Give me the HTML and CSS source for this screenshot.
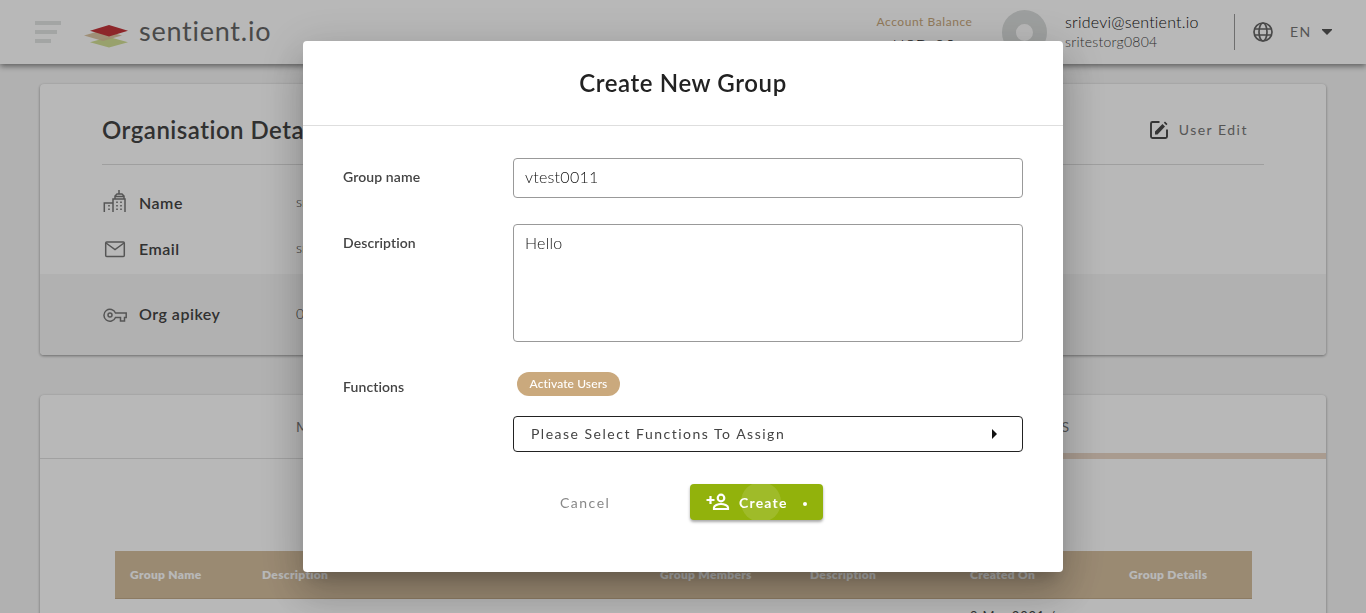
FILE: index.html
```
<!DOCTYPE html>
<html lang="en">
<head>
<meta charset="utf-8">
<title>sentient.io</title>
<link rel="stylesheet" href="styles.css">
</head>
<body>
<header class="topbar">
  <div class="burger"><i></i><i></i><i></i></div>
  <div class="brand">
    <svg width="46" height="24" viewBox="0 0 46 24">
      <path d="M6 17.200 25 12l19 5.200L25 22.500z" fill="#d3e096"/>
      <path d="M0 10.500 19 5l19 5.500L19 16z" fill="#d9c19b" fill-opacity=".9"/>
      <path d="M6 5.700 25 0l19 5.700L25 11.500z" fill="#c4353b"/>
    </svg>
    <span class="brand-name">sentient.io</span>
  </div>
  <div class="balance"><span class="balance-label">Account Balance</span><span class="balance-value">USD 20</span></div>
  <div class="avatar"></div>
  <div class="account"><span class="account-mail">sridevi@sentient.io</span><span class="account-org">sritestorg0804</span></div>
  <div class="lang">
    <svg width="20" height="20" viewBox="0 0 20 20" fill="none" stroke="#666" stroke-width="1.700"><circle cx="10" cy="10" r="9"/><ellipse cx="10" cy="10" rx="4" ry="9"/><path d="M1.500 7h17M1.500 13h17"/></svg>
    <span class="lang-code">EN</span>
    <svg width="10" height="6" viewBox="0 0 10 6"><path d="M0 0h10v1L5 6 0 1z" fill="#555"/></svg>
  </div>
</header>
<main class="page">
  <section class="card details">
    <div class="details-head">
      <h2 class="details-title">Organisation Details</h2>
      <div class="edit">
        <svg width="20" height="20" viewBox="0 0 20 20" fill="none" stroke="#484848" stroke-width="1.900"><path d="M10.500 2H3.500Q2 2 2 3.500v13Q2 18 3.500 18h13q1.500 0 1.500-1.500V9.500"/><path d="M6 14.500v-3L13.500 4l2.500 2.500-7.500 8zM14.800 2.700l1.200-1.200 2.500 2.500-1.200 1.200z" fill="#484848" stroke="none"/></svg>
        <span class="edit-label">User Edit</span>
      </div>
    </div>
    <div class="detail name">
      <svg width="24" height="24" viewBox="0 0 24 24" fill="none" stroke="#777" stroke-width="1.500"><path d="M1.300 23V14h8M10 23V10h12v13M12 10V7l2-2h5l2 2v3M12 7.500h9M16 1v4"/><path d="M6 16v1.600M6 19.500v1.600M14 12.500v1.600M18 12.500v1.600M14 16v1.600M18 16v1.600M14 19.500v1.600M18 19.500v1.600" stroke-width="1.600"/></svg>
      <span class="detail-label">Name</span><span class="detail-value">sritestorg</span>
    </div>
    <div class="detail email">
      <svg width="24" height="24" viewBox="0 0 24 24" fill="none" stroke="#777" stroke-width="1.500"><rect x="2.700" y="5" width="18.600" height="14.500" rx="1"/><path d="m3 6 9 6.500L21 6"/></svg>
      <span class="detail-label">Email</span><span class="detail-value">sridevi</span>
    </div>
    <div class="detail apikey">
      <svg width="24" height="24" viewBox="0 0 24 24" fill="none" stroke="#777" stroke-width="1.500"><path d="M12.500 10h10.700v4.500h-1.700V18h-4v-3.500h-5A6 6 0 1 1 12.500 10z"/><circle cx="7" cy="12" r="2"/></svg>
      <span class="detail-label">Org apikey</span><span class="detail-value">0A4C92E1</span>
    </div>
  </section>
  <section class="card groups">
    <div class="tabs"><span class="tab">MEMBERS</span><span class="tab active">GROUPS</span></div>
    <div class="grid thead"><span>Group Name</span><span>Description</span><span>Group Members</span><span>Description</span><span>Created On</span><span>Group Details</span></div>
    <div class="grid row"><span></span><span></span><span></span><span></span><span>9 Mar 2021 /</span><span></span></div>
  </section>
</main>
<div class="overlay">
  <div class="modal">
    <h1 class="modal-title"><span>Create New Group</span></h1>
    <div class="form">
      <label class="f-label f-group">Group name</label><div class="input">vtest0011</div>
      <label class="f-label f-desc">Description</label><div class="input area">Hello</div>
      <label class="f-label f-func">Functions</label>
      <div class="functions">
        <span class="chip">Activate Users</span>
        <div class="select"><span>Please Select Functions To Assign</span><svg width="5" height="10" viewBox="0 0 5 10"><path d="M0 0l5 5-5 5z" fill="#111"/></svg></div>
      </div>
    </div>
    <div class="actions">
      <span class="cancel">Cancel</span>
      <div class="create">
        <i class="ripple"></i>
        <svg width="24" height="18" viewBox="0 0 24 18" fill="none" stroke="#fff" stroke-width="2.200"><circle cx="15" cy="5" r="3.300"/><path d="M8 16v-1.500c0-2.200 4-3.500 7-3.500s7 1.300 7 3.500V16zM4.500 3v8M.5 7h8"/></svg>
        <span class="create-label">Create</span><i class="dot"></i>
      </div>
    </div>
  </div>
</div>
</body>
</html>
```
FILE: styles.css
```
* { box-sizing: border-box; }
body { margin: 0; height: 613px; overflow: hidden; background: #f6f6f6; font-family: Lato, "Noto Sans", sans-serif; font-variant-ligatures: none; color: #444; }
svg { flex: none; display: block; }
h1, h2 { margin: 0; }
span { white-space: nowrap; }

.topbar { position: relative; height: 64px; display: flex; background: #fff; box-shadow: 0 2px 6px rgba(0,0,0,.5); }
.burger { width: 26px; margin: 21px 0 0 35px; display: flex; flex-direction: column; gap: 5px; }
.burger i { height: 4px; background: #e2e5e4; }
.burger i:nth-child(2) { width: 22px; }
.burger i:nth-child(3) { width: 16px; }
.brand { width: 792px; margin-left: 23px; display: flex; }
.brand svg { margin-top: 25px; }
.brand-name { margin: 14px 0 0 9px; font-size: 27px; line-height: 34px; letter-spacing: .75px; color: #666; }
.balance { width: 97px; display: flex; flex-direction: column; align-items: center; padding-top: 14px; }
.balance-label { font-size: 12px; line-height: 16px; letter-spacing: .55px; color: #c9a87c; }
.balance-value { margin-top: 5px; font-size: 16px; line-height: 20px; font-weight: 300; letter-spacing: 1.400px; color: #222; }
.avatar { width: 45px; height: 45px; margin: 10px 0 0 29px; border: 14.500px solid #dadddc; border-radius: 50%; background: #fff; }
.account { width: 169px; margin-left: 18px; padding-top: 12px; display: flex; flex-direction: column; }
.account-mail { font-size: 16px; line-height: 20px; font-weight: 300; letter-spacing: .22px; color: #111; }
.account-org { margin-top: 1px; font-size: 14px; line-height: 18px; font-weight: 300; letter-spacing: .25px; color: #444; }
.lang { height: 36px; margin-top: 14px; padding-left: 18px; border-left: 1px solid #999; display: flex; align-items: center; }
.lang-code { width: 32px; margin: -1px 0 0 17px; font-size: 14px; letter-spacing: 1.500px; color: #777; }

.page { padding: 20px 40px 0; display: flex; flex-direction: column; gap: 40px; }
.card { background: #fff; border-radius: 4px; box-shadow: 0 1px 3px rgba(0,0,0,.4); }
.details { height: 271px; overflow: hidden; }
.details-head { height: 81px; margin: 0 62px 0 62px; padding: 0 16px 0 0; border-bottom: 1px solid #ddd; display: flex; justify-content: space-between; }
.details-title { margin-top: 31px; font-size: 24px; line-height: 30px; font-weight: 600; letter-spacing: .5px; }
.edit { height: 20px; margin-top: 36px; display: flex; gap: 10px; align-items: center; }
.edit-label { margin-top: -1px; font-size: 14px; letter-spacing: 1.500px; color: #777; }
.detail { display: flex; align-items: center; padding-left: 63px; }
.detail-label { width: 157px; margin: -2px 0 0 12px; font-size: 16px; font-weight: 600; letter-spacing: .5px; }
.detail-value { margin-top: -3px; font-size: 14px; font-weight: 300; color: #333; }
.name { height: 26px; margin-top: 25px; }
.name svg { margin-top: -4px; }
.email { height: 26px; margin-top: 20px; }
.apikey { height: 81px; margin-top: 12px; background: #f6f6f6; }
.apikey .detail-label { margin-top: -3px; }
.groups { height: 240px; }
.tabs { height: 64px; display: flex; border-bottom: 1px solid #e0e0e0; }
.tab { width: 643px; height: 64px; padding: 23px 0 0 256px; font-size: 14px; line-height: 18px; color: #777; }
.tab.active { padding: 23px 257px 0 0; text-align: right; border-bottom: 6px solid #ead7c7; }
.grid { margin: 0 74px 0 75px; padding-left: 15px; display: grid; grid-template-columns: 132px 398px 150px 160px 159px auto; }
.thead { height: 48px; margin-top: 92px; padding-bottom: 1px; align-items: center; background: #d6bf9f; border-bottom: 1px solid #c3ab89; font-size: 12px; font-weight: 800; letter-spacing: .3px; color: #fff; }
.row { padding-top: 8px; font-size: 13px; line-height: 18px; letter-spacing: .8px; }

.overlay { position: fixed; inset: 0; display: flex; align-items: center; justify-content: center; background: rgba(0,0,0,.28); }
.modal { width: 760px; height: 531px; border-radius: 4px; background: #fff; box-shadow: 0 11px 15px -7px rgba(0,0,0,.2), 0 24px 38px 3px rgba(0,0,0,.14), 0 9px 46px 8px rgba(0,0,0,.12); }
.modal-title { height: 85px; padding-bottom: 2px; border-bottom: 1px solid #dedede; display: flex; align-items: center; justify-content: center; font-size: 24px; font-weight: 600; letter-spacing: .6px; color: #222; }
.form { padding: 32px 40px 0; display: grid; grid-template-columns: 170px 510px; grid-template-rows: 40px 118px 84px; row-gap: 26px; }
.f-label { padding-top: 9px; font-size: 14px; line-height: 20px; font-weight: 600; letter-spacing: .1px; }
.input { height: 40px; padding: 7px 11px; border: 1px solid #999; border-radius: 4px; font-size: 16px; line-height: 22px; font-weight: 300; letter-spacing: .25px; color: #111; }
.area { height: 118px; }
.functions { padding-top: 4px; }
.chip { display: block; width: 103px; height: 24px; margin-left: 4px; border-radius: 12px; background: #caa97d; color: #fff; text-align: center; font-size: 12px; line-height: 24px; font-weight: 500; letter-spacing: .1px; }
.select { height: 36px; margin-top: 20px; padding: 0 25px 0 17px; border: 1px solid #222; border-radius: 4px; display: flex; align-items: center; justify-content: space-between; font-size: 14px; letter-spacing: 1.500px; }
.select span { margin-top: -1px; }
.actions { margin-top: 32px; padding-left: 257px; display: flex; align-items: center; }
.cancel { width: 130px; font-size: 14px; letter-spacing: 1.500px; color: #888; }
.create { position: relative; width: 133px; height: 36px; padding-left: 16px; border-radius: 4px; background: #92b20c; box-shadow: 0 2px 3px rgba(0,0,0,.35); overflow: hidden; display: flex; align-items: center; color: #fff; }
.create-label { width: 64px; margin-left: 9px; font-size: 14px; font-weight: 700; letter-spacing: 1.200px; }
.ripple { position: absolute; left: 51px; top: -2px; width: 40px; height: 40px; border-radius: 50%; background: rgba(255,255,255,.12); }
.dot { width: 4px; height: 4px; margin-top: 4px; border-radius: 50%; background: #fff; }
```
